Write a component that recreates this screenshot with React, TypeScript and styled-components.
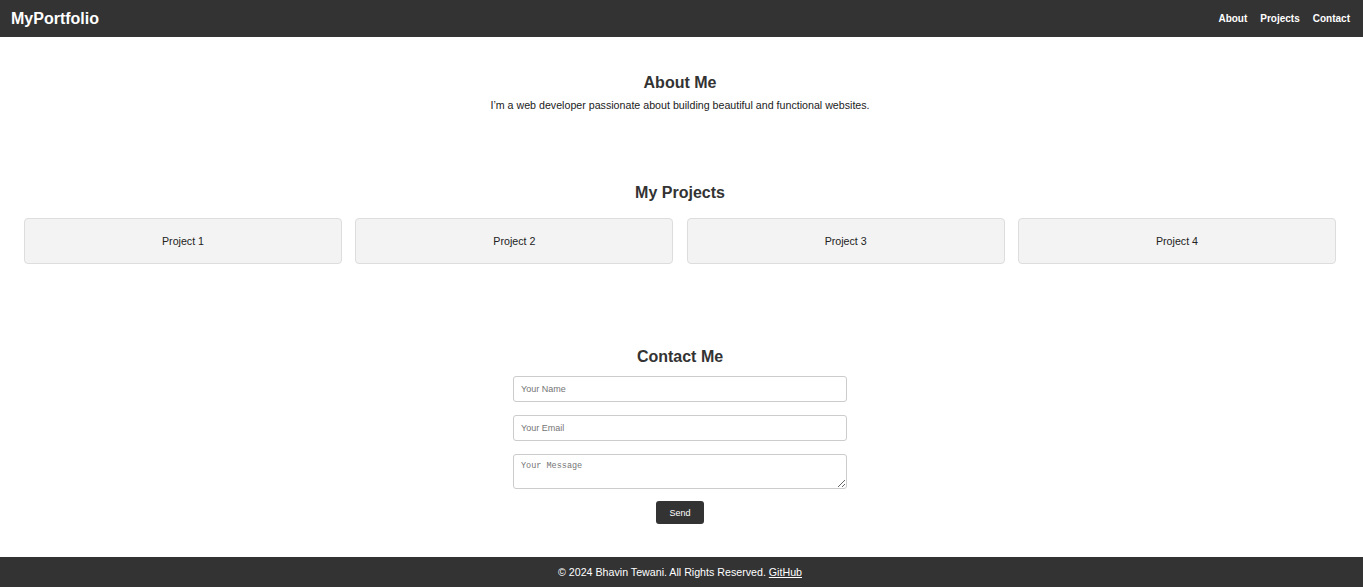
import styled, { createGlobalStyle } from "styled-components";

const GlobalStyle = createGlobalStyle`
  * {
    box-sizing: border-box;
  }
  body {
    margin: 0;
    font-family: "Liberation Sans", Arial, sans-serif;
    font-size: 10.67px;
    color: #333;
    background: #fff;
  }
`;

const projects = ["Project 1", "Project 2", "Project 3", "Project 4"];

export default function App() {
  return (
    <>
      <GlobalStyle />
      <Header>
        <Logo>MyPortfolio</Logo>
        <Nav>
          <NavLink href="#about">About</NavLink>
          <NavLink href="#projects">Projects</NavLink>
          <NavLink href="#contact">Contact</NavLink>
        </Nav>
      </Header>

      <Main>
        <Section id="about" top={37} bottom={36}>
          <Title>About Me</Title>
          <Text>I’m a web developer passionate about building beautiful and functional websites.</Text>
        </Section>

        <Section id="projects" top={37} bottom={47}>
          <Title spaced>My Projects</Title>
          <ProjectGrid>
            {projects.map((p) => (
              <ProjectCard key={p}>{p}</ProjectCard>
            ))}
          </ProjectGrid>
        </Section>

        <Section id="contact" top={36.5} bottom={33}>
          <Title>Contact Me</Title>
          <Form onSubmit={(e) => e.preventDefault()}>
            <Input type="text" placeholder="Your Name" />
            <Input type="email" placeholder="Your Email" />
            <TextArea placeholder="Your Message" />
            <SendButton type="submit">Send</SendButton>
          </Form>
        </Section>
      </Main>

      <Footer>
        © 2024 Bhavin Tewani. All Rights Reserved. <FooterLink href="#">GitHub</FooterLink>
      </Footer>
    </>
  );
}

// styled components

const Header = styled.header`
  height: 37px;
  background-color: #333;
  color: #fff;
  display: flex;
  align-items: center;
  justify-content: space-between;
  padding: 0 13px 0 11px;
`;

const Logo = styled.div`
  font-size: 16px;
  font-weight: bold;
`;

const Nav = styled.nav`
  display: flex;
  gap: 13px;
`;

const NavLink = styled.a`
  color: #fff;
  text-decoration: none;
  font-size: 10px;
  font-weight: bold;
`;

const Main = styled.main`
  padding-right: 3px;
`;

const Section = styled.section<{ top: number; bottom: number }>`
  padding: ${({ top }) => top}px 0 ${({ bottom }) => bottom}px;
  text-align: center;
`;

const Title = styled.h2<{ spaced?: boolean }>`
  margin: 0 0 ${({ spaced }) => (spaced ? "16.5px" : "6.5px")};
  font-size: 16px;
  line-height: 18px;
  font-weight: bold;
  color: #333;
`;

const Text = styled.p`
  margin: 0;
  font-size: 10.67px;
  line-height: 12px;
  color: #222;
`;

const ProjectGrid = styled.div`
  display: grid;
  grid-template-columns: repeat(4, 1fr);
  gap: 13.3px;
  padding: 0 24px;
`;

const ProjectCard = styled.div`
  height: 46px;
  display: flex;
  align-items: center;
  justify-content: center;
  background-color: #f3f3f3;
  border: 1px solid #ddd;
  border-radius: 4px;
  font-size: 10.67px;
  color: #222;
`;

const Form = styled.form`
  width: 334px;
  margin: 10.5px auto 0;
  display: flex;
  flex-direction: column;
  align-items: center;
  gap: 13px;
`;

const fieldStyles = `
  width: 100%;
  border: 1px solid #ccc;
  border-radius: 3px;
  padding: 0 7px;
  color: #333;
  background: #fff;
  outline: none;
`;

const Input = styled.input`
  ${fieldStyles}
  height: 26px;
  font-family: "Liberation Sans", Arial, sans-serif;
  font-size: 9px;
  &::placeholder {
    color: #757575;
  }
`;

const TextArea = styled.textarea`
  ${fieldStyles}
  height: 35px;
  padding-top: 6px;
  font-family: "Liberation Mono", monospace;
  font-size: 8.5px;
  resize: both;
  &::placeholder {
    color: #757575;
  }
`;

const SendButton = styled.button`
  width: 48px;
  height: 23px;
  margin-top: -1px;
  background-color: #333;
  color: #fff;
  border: none;
  border-radius: 3px;
  font-family: "Liberation Sans", Arial, sans-serif;
  font-size: 9px;
  cursor: pointer;
`;

const Footer = styled.footer`
  height: 30px;
  padding-right: 3px;
  background-color: #333;
  color: #fff;
  display: flex;
  align-items: center;
  justify-content: center;
  font-size: 10.67px;
  white-space: pre;
`;

const FooterLink = styled.a`
  color: #fff;
  text-decoration: underline;
`;
